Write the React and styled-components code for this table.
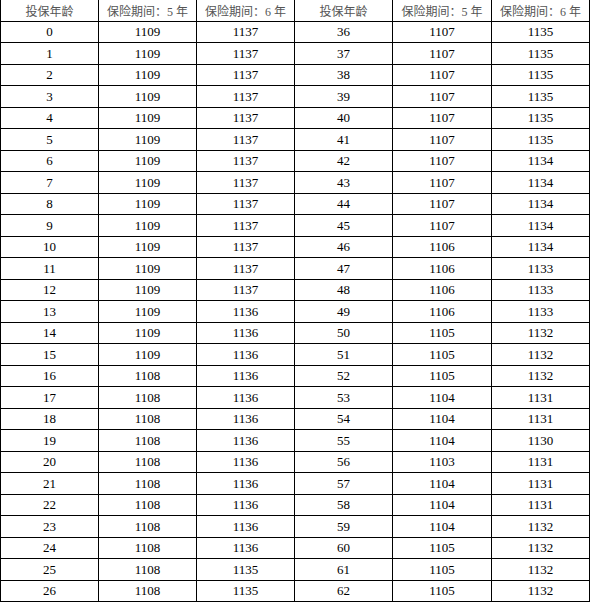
import React from 'react'
import styled, { createGlobalStyle } from 'styled-components'

const GlobalStyle = createGlobalStyle`
  html, body {
    margin: 0;
    padding: 0;
    background: #fff;
    font-family: "Liberation Serif", "Times New Roman", "Noto Sans CJK SC", serif;
  }
`

const ages = Array.from({ length: 27 }, (_, i) => i)

const col2 = ages.map(a => (a <= 15 ? 1109 : 1108))
const col3 = ages.map(a => (a <= 12 ? 1137 : a <= 24 ? 1136 : 1135))
const col5 = [1107,1107,1107,1107,1107,1107,1107,1107,1107,1107,1106,1106,1106,1106,1105,1105,1105,1104,1104,1104,1103,1104,1104,1104,1105,1105,1105]
const col6 = [1135,1135,1135,1135,1135,1135,1134,1134,1134,1134,1134,1133,1133,1133,1132,1132,1132,1131,1131,1130,1131,1131,1131,1132,1132,1132,1132]

const rows = ages.map((a, i) => [a, col2[i], col3[i], a + 36, col5[i], col6[i]])

const headers = ['投保年龄', '保险期间：5 年', '保险期间：6 年', '投保年龄', '保险期间：5 年', '保险期间：6 年']
const widths = [98, 98, 98, 98, 99, 98]

export default function App() {
  return (
    <>
      <GlobalStyle />
      <Sheet>
        <colgroup>
          {widths.map((w, i) => <col key={i} style={{ width: w }} />)}
        </colgroup>
        <thead>
          <tr>
            {headers.map((h, i) => <Head key={i}>{h}</Head>)}
          </tr>
        </thead>
        <tbody>
          {rows.map((r, i) => (
            <Row key={i}>
              {r.map((v, j) => <Cell key={j}>{v}</Cell>)}
            </Row>
          ))}
        </tbody>
      </Sheet>
    </>
  )
}

const Sheet = styled.table`
  border-collapse: collapse;
  table-layout: fixed;
  width: 590px;
  color: #000;
`

const Head = styled.th`
  height: 21px;
  padding: 0;
  font-family: "Liberation Serif", "Noto Sans CJK SC", serif;
  font-weight: normal;
  font-size: 12px;
  color: #555;
  text-align: center;
  border: 1px solid #000;
  border-top: none;
  white-space: nowrap;
`

const Row = styled.tr`
  height: 21px;
  &:nth-child(even) {
    height: 22px;
  }
`

const Cell = styled.td`
  padding: 0;
  font-family: "Liberation Serif", "Times New Roman", serif;
  font-size: 13px;
  text-align: center;
  border: 1px solid #000;
`
